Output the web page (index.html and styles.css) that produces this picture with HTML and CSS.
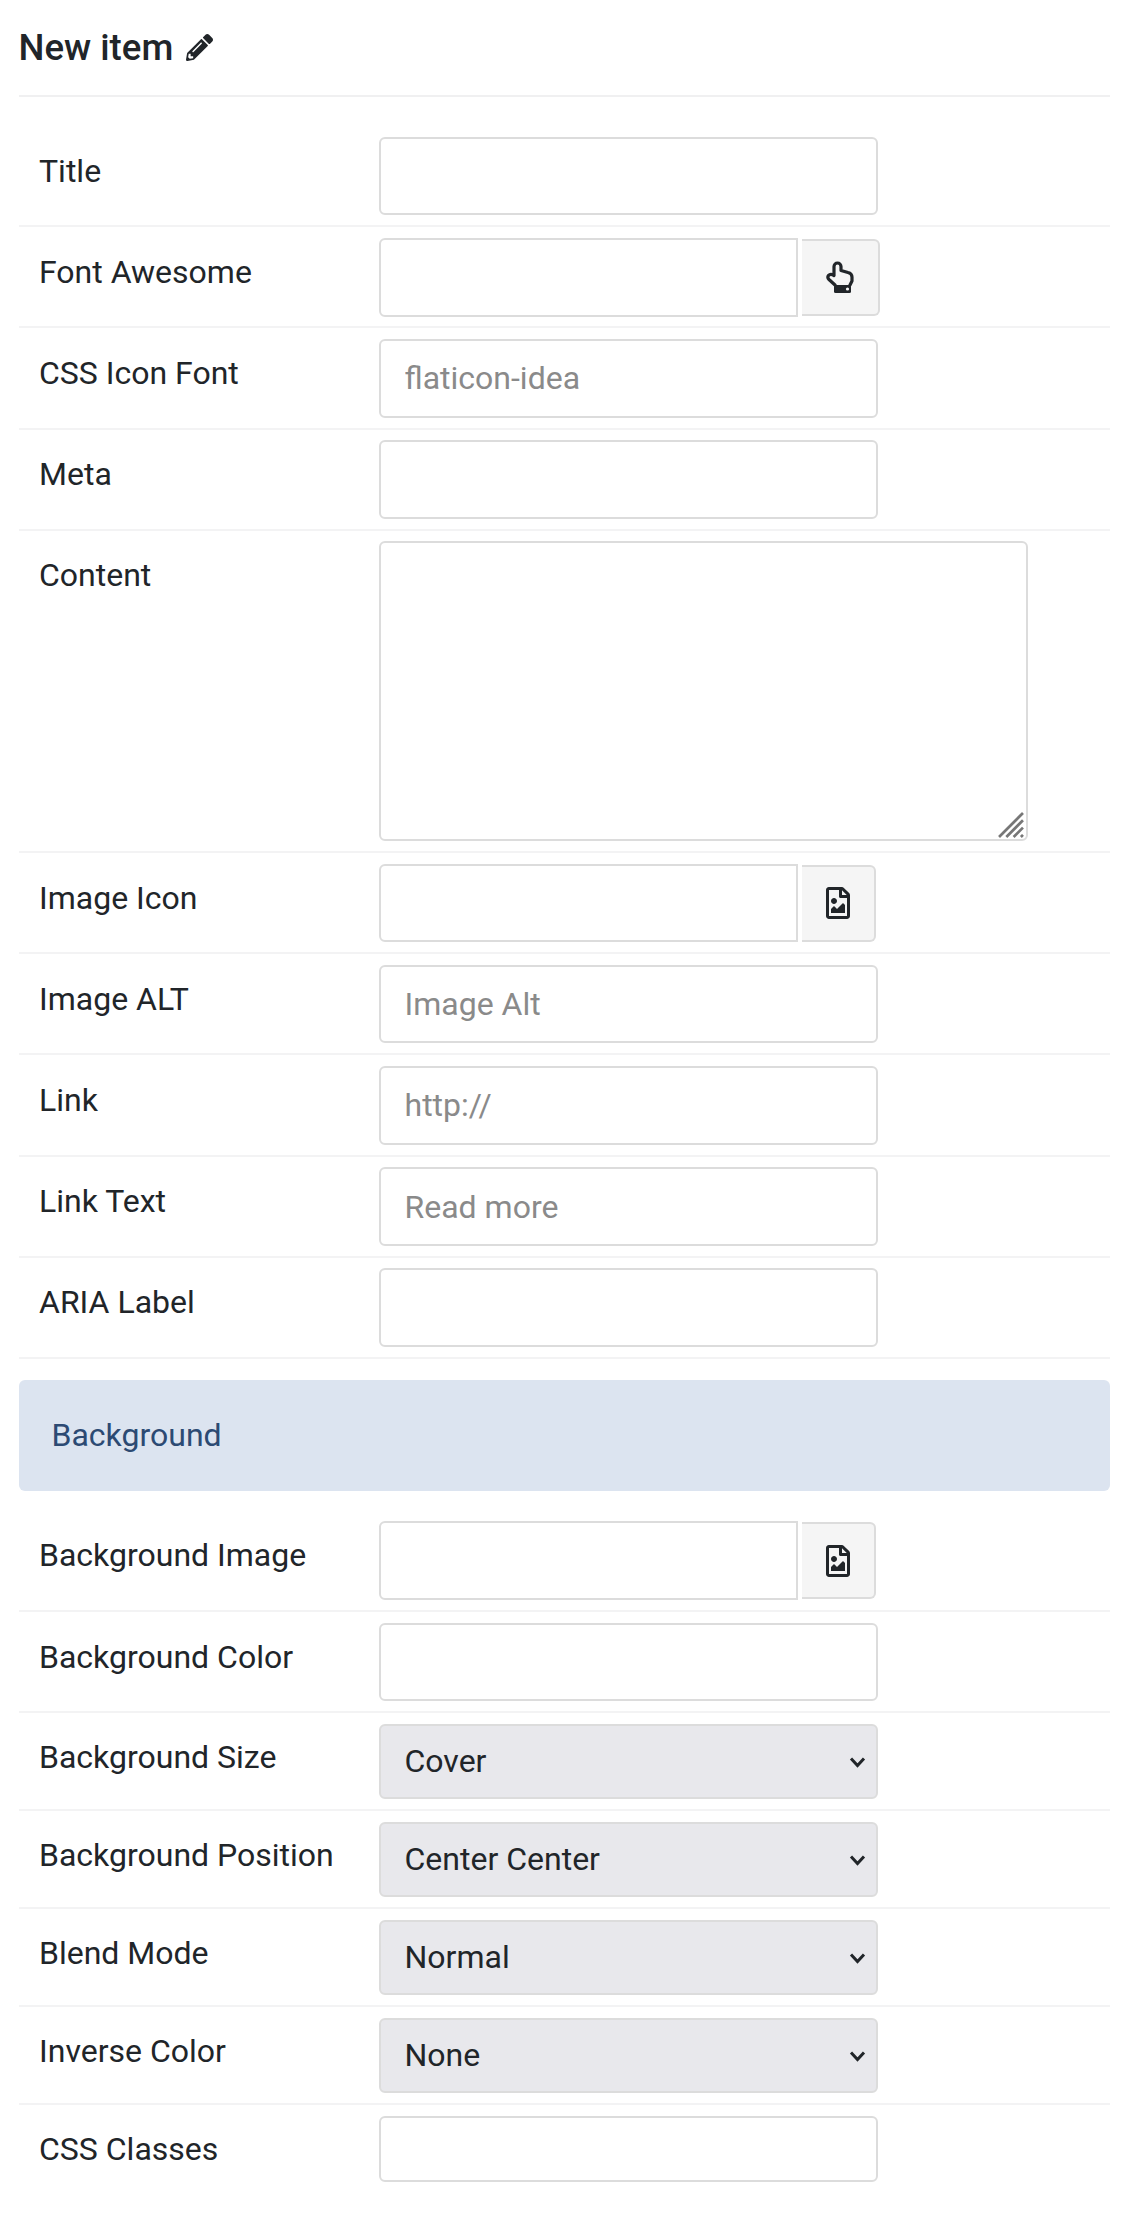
FILE: index.html
```
<!DOCTYPE html>
<html lang="en">
<head>
<meta charset="utf-8">
<title>New item</title>
<link rel="stylesheet" href="styles.css">
</head>
<body>
<main class="form">
  <h1 class="heading">New item
    <svg class="pencil" viewBox="0 0 512 512" aria-hidden="true"><path d="M497.9 142.1l-46.1 46.1c-4.7 4.7-12.3 4.7-17 0l-111-111c-4.7-4.7-4.7-12.3 0-17l46.1-46.1c18.7-18.7 49.1-18.7 67.9 0l60.1 60.1c18.8 18.7 18.8 49.1 0 67.9zM284.2 99.8L21.6 362.4.4 483.9c-2.9 16.4 11.4 30.6 27.8 27.8l121.5-21.3 262.6-262.6c4.7-4.7 4.7-12.3 0-17l-111-111c-4.8-4.7-12.4-4.7-17.1 0zM124.1 339.9c-5.5-5.5-5.5-14.3 0-19.8l154-154c5.5-5.5 14.3-5.5 19.8 0s5.5 14.3 0 19.8l-154 154c-5.5 5.5-14.3 5.5-19.8 0zM88 424h48v36.3l-64.5 11.3-31.1-31.1L51.7 376H88v48z"/></svg>
  </h1>

  <div class="rows">
    <div class="row"><label class="label">Title</label><input class="field" type="text"></div>
    <div class="row"><label class="label">Font Awesome</label>
      <div class="group"><input class="field field-group" type="text">
        <button class="addon addon-wide" type="button">
          <svg class="hand" viewBox="0 0 28 32" aria-hidden="true"><path class="hand-line" d="M9 24 3 18.5Q1 16.5 2.5 14.5 4.5 12.5 8 14.5V5.5a3.5 3.5 0 0 1 7 0V9.5l7 2q4 1 4 4.5v4l-2 4"/><rect class="hand-cuff" x="8" y="24" width="17" height="8" rx="1.5"/><circle class="hand-dot" cx="21.5" cy="28" r="1.6"/></svg>
        </button>
      </div>
    </div>
    <div class="row"><label class="label">CSS Icon Font</label><input class="field" type="text" placeholder="flaticon-idea"></div>
    <div class="row"><label class="label">Meta</label><input class="field" type="text"></div>
    <div class="row"><label class="label">Content</label>
      <div class="area-wrap"><textarea class="area"></textarea>
        <svg class="grip" viewBox="0 0 25 25" aria-hidden="true"><path d="M1 24 24 1M8 24 24 8M15 24 24 15M22 24l2-2"/></svg>
      </div>
    </div>
    <div class="row"><label class="label">Image Icon</label>
      <div class="group"><input class="field field-group" type="text">
        <button class="addon" type="button"><svg class="file" viewBox="0 0 384 512" aria-hidden="true"><path d="M369.9 97.9L286 14C277 5 264.8-.1 252.1-.1H48C21.5 0 0 21.5 0 48v416c0 26.5 21.5 48 48 48h288c26.5 0 48-21.5 48-48V131.9c0-12.7-5.1-25-14.1-34zM332.1 128H256V51.9l76.1 76.1zM48 464V48h160v104c0 13.3 10.7 24 24 24h104v288H48zm32-48h224V288l-23.5-23.5c-4.7-4.7-12.3-4.7-17 0L176 352l-39.5-39.5c-4.7-4.7-12.3-4.7-17 0L80 352v64zm48-240c-26.5 0-48 21.5-48 48s21.5 48 48 48 48-21.5 48-48-21.5-48-48-48z"/></svg></button>
      </div>
    </div>
    <div class="row"><label class="label">Image ALT</label><input class="field" type="text" placeholder="Image Alt"></div>
    <div class="row"><label class="label">Link</label><input class="field" type="text" placeholder="http://"></div>
    <div class="row"><label class="label">Link Text</label><input class="field" type="text" placeholder="Read more"></div>
    <div class="row"><label class="label">ARIA Label</label><input class="field" type="text"></div>
  </div>

  <div class="panel">Background</div>

  <div class="rows">
    <div class="row"><label class="label">Background Image</label>
      <div class="group"><input class="field field-group" type="text">
        <button class="addon" type="button"><svg class="file" viewBox="0 0 384 512" aria-hidden="true"><path d="M369.9 97.9L286 14C277 5 264.8-.1 252.1-.1H48C21.5 0 0 21.5 0 48v416c0 26.5 21.5 48 48 48h288c26.5 0 48-21.5 48-48V131.9c0-12.7-5.1-25-14.1-34zM332.1 128H256V51.9l76.1 76.1zM48 464V48h160v104c0 13.3 10.7 24 24 24h104v288H48zm32-48h224V288l-23.5-23.5c-4.7-4.7-12.3-4.7-17 0L176 352l-39.5-39.5c-4.7-4.7-12.3-4.7-17 0L80 352v64zm48-240c-26.5 0-48 21.5-48 48s21.5 48 48 48 48-21.5 48-48-21.5-48-48-48z"/></svg></button>
      </div>
    </div>
    <div class="row"><label class="label">Background Color</label><input class="field" type="text"></div>
    <div class="row"><label class="label label-select">Background Size</label>
      <div class="select-wrap"><select class="select"><option>Cover</option></select><svg class="chevron" viewBox="0 0 16 11" aria-hidden="true"><path d="M1.5 1.5 8 8.5l6.5-7"/></svg></div>
    </div>
    <div class="row"><label class="label label-select">Background Position</label>
      <div class="select-wrap"><select class="select"><option>Center Center</option></select><svg class="chevron" viewBox="0 0 16 11" aria-hidden="true"><path d="M1.5 1.5 8 8.5l6.5-7"/></svg></div>
    </div>
    <div class="row"><label class="label label-select">Blend Mode</label>
      <div class="select-wrap"><select class="select"><option>Normal</option></select><svg class="chevron" viewBox="0 0 16 11" aria-hidden="true"><path d="M1.5 1.5 8 8.5l6.5-7"/></svg></div>
    </div>
    <div class="row"><label class="label label-select">Inverse Color</label>
      <div class="select-wrap"><select class="select"><option>None</option></select><svg class="chevron" viewBox="0 0 16 11" aria-hidden="true"><path d="M1.5 1.5 8 8.5l6.5-7"/></svg></div>
    </div>
    <div class="row row-last"><label class="label label-center">CSS Classes</label><input class="field field-small" type="text"></div>
  </div>
</main>
</body>
</html>
```
FILE: styles.css
```
* { box-sizing: border-box; }

html, body { margin: 0; padding: 0; background: #fff; }

body {
  font-family: Roboto, "Liberation Sans", sans-serif;
  font-size: 32px;
  line-height: 47px;
  color: #212529;
}

.form { margin: 0 16px 0 18.5px; }

.heading {
  display: flex;
  align-items: center;
  gap: 12.5px;
  margin: 0 0 29px;
  padding: 26px 0 26px;
  border-bottom: 2px solid #f0f0f1;
  font-size: 36.6px;
  line-height: 43px;
  font-weight: 500;
}

.pencil { width: 27px; height: 27px; fill: #212529; }

.row {
  display: grid;
  grid-template-columns: 360px 1fr;
  padding: 10.6px 0 9.95px;
  border-bottom: 2px solid #f3f3f4;
}

.row-last { border-bottom: 0; }

.label {
  padding: 11px 0 0 20.5px;
}

.label-select { padding-top: 10.4px; }

.label-center { padding-top: 10px; }

.field {
  display: block;
  width: 499px;
  height: 78.7px;
  padding: 0 24px;
  border: 2px solid #dcdcdc;
  border-radius: 6px;
  background: #fff;
  color: #212529;
  font: inherit;
  outline: 0;
}

.field::placeholder { color: #8a8a8a; opacity: 1; }

.field-small { height: 66.5px; }

.group { display: flex; align-items: flex-start; }

.field-group {
  width: 419px;
  border-radius: 0;
  border-top-left-radius: 6px;
  border-bottom-left-radius: 6px;
}

.addon {
  display: flex;
  align-items: center;
  justify-content: center;
  width: 74px;
  height: 77px;
  margin: 1px 0 0 4px;
  padding: 0;
  border: 2px solid #dcdcdc;
  border-left: 0;
  border-radius: 0 6px 6px 0;
  background: #f5f5f5;
}

.addon-wide { width: 78px; }

.file { width: 24px; height: 32px; fill: #212529; }

.hand { width: 28px; height: 32px; }

.hand-line {
  fill: none;
  stroke: #212529;
  stroke-width: 3.2;
  stroke-linejoin: round;
  stroke-linecap: round;
}

.hand-cuff { fill: #212529; }

.hand-dot { fill: #f5f5f5; }

.area-wrap { position: relative; width: 649px; }

.area {
  display: block;
  width: 649px;
  height: 299.5px;
  padding: 10px 24px;
  border: 2px solid #dcdcdc;
  border-radius: 6px;
  background: #fff;
  color: #212529;
  font: inherit;
  resize: none;
  outline: 0;
}

.grip {
  position: absolute;
  right: 3.5px;
  bottom: 3px;
  width: 26px;
  height: 26px;
  fill: none;
  stroke: #777;
  stroke-width: 2.6;
}

.panel {
  height: 111.7px;
  margin: 20.5px 0 19.7px;
  padding: 32px 33px 0;
  border-radius: 6px;
  background: #dce4f0;
  color: #2c4a73;
}

.select-wrap { position: relative; width: 499px; }

.select {
  display: block;
  width: 499px;
  height: 75.4px;
  padding: 0 24px;
  border: 2px solid #dcdcdc;
  border-radius: 6px;
  background: #e8e8ec;
  color: #212529;
  font: inherit;
  appearance: none;
  outline: 0;
}

.chevron {
  position: absolute;
  right: 12px;
  top: 33px;
  width: 17px;
  height: 11px;
  fill: none;
  stroke: #212529;
  stroke-width: 3;
  pointer-events: none;
}
```
